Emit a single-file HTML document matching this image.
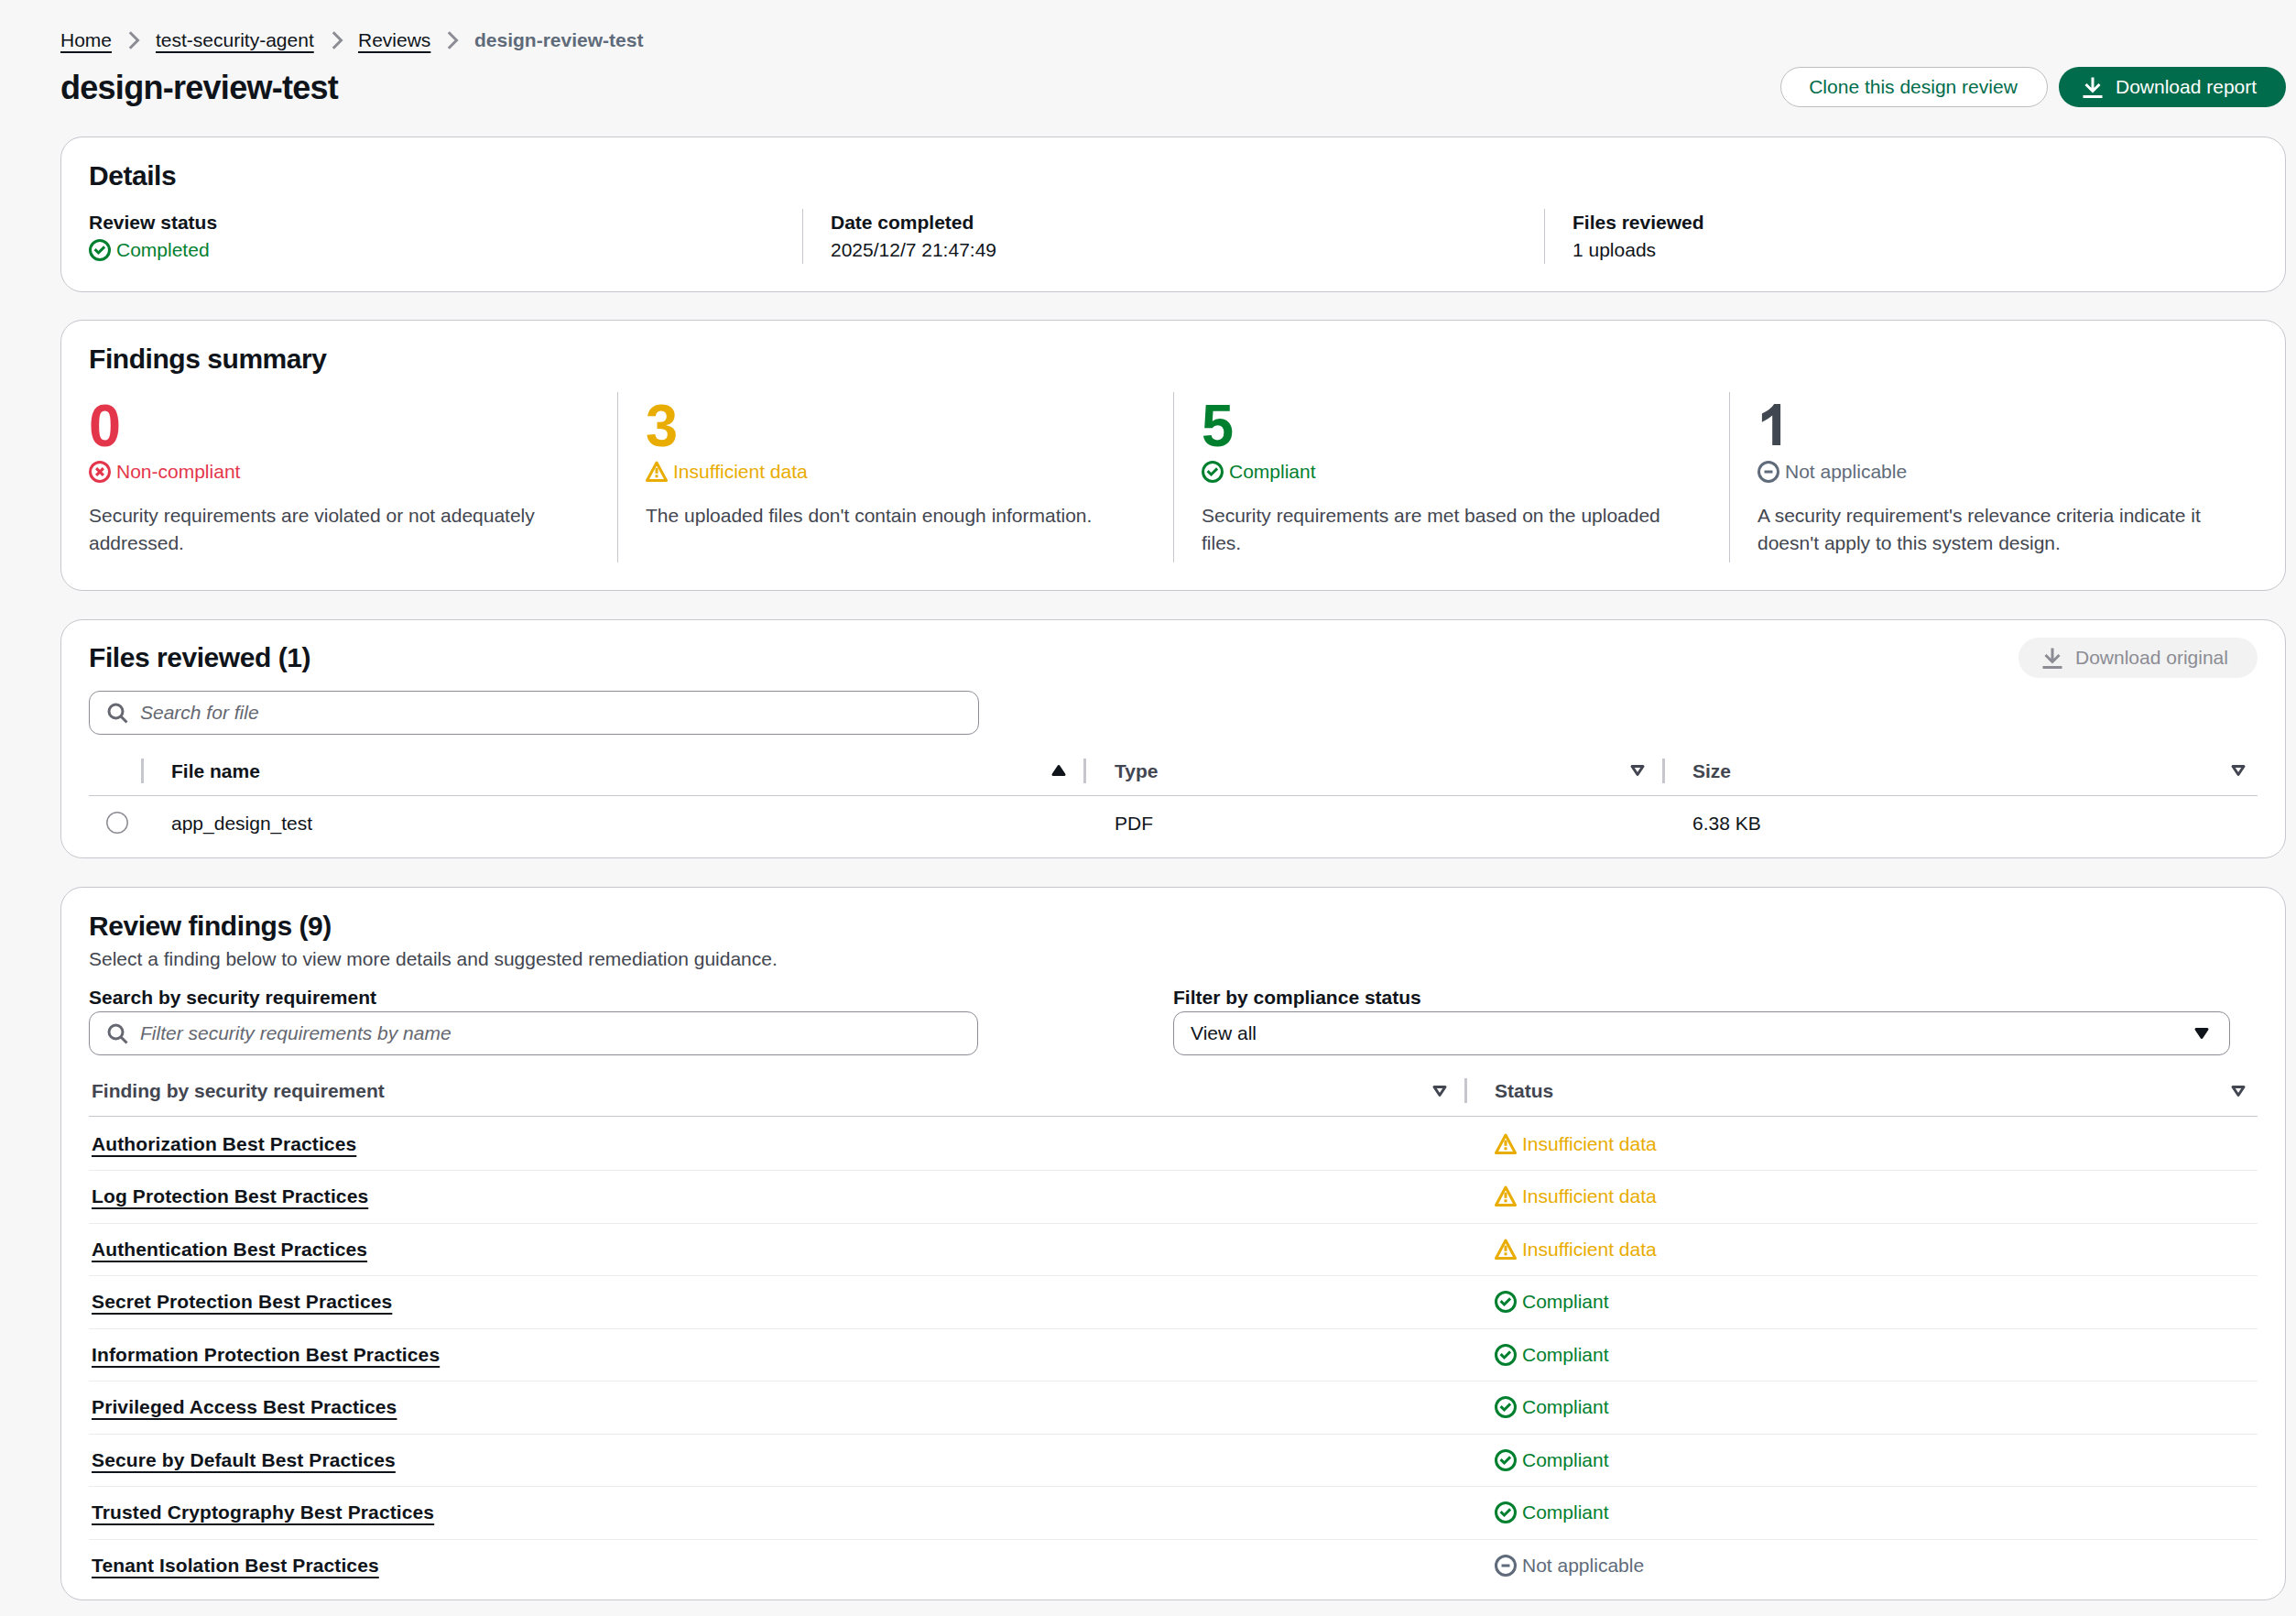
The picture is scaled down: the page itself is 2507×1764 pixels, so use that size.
<!DOCTYPE html>
<html><head><meta charset="utf-8">
<style>
*{box-sizing:border-box;margin:0;padding:0}
html,body{width:2507px;height:1764px;overflow:hidden;background:#f7f7f7}
body{font-family:"Liberation Sans",sans-serif;color:#0f141a;font-size:21px;line-height:30px;position:relative}
.a{position:absolute;white-space:nowrap}
.card{position:absolute;left:66px;width:2430px;background:#fff;border:1px solid #c6c6cd;border-radius:24px}
.h2{font-size:30px;line-height:36px;font-weight:700;letter-spacing:-0.45px}
.b{font-weight:700}
.sec{color:#424650}
.green{color:#00802f}
.red{color:#e4364a}
.amber{color:#e9ac00}
.gray{color:#5f6b7a}
.vdiv{position:absolute;width:1px;background:#c6c6cd}
svg{position:absolute;overflow:visible}
.ic{fill:none;stroke-width:2;stroke-linecap:round;stroke-linejoin:round}
.lnk{text-decoration:underline;text-underline-offset:5px;text-decoration-thickness:2px}
.num{font-size:63px;line-height:72px;font-weight:700;letter-spacing:-1.89px;transform:scaleY(1.035);transform-origin:0 59px}
.input{position:absolute;border:1px solid #8c8c94;border-radius:12px;background:#fff}
.ph{font-style:italic;color:#656871}
.hline{position:absolute;height:2px;background:#c6c6cd}
.rline{position:absolute;height:1px;background:#ebebf0}
.tl{letter-spacing:0.12px}
</style></head><body>
<svg width="0" height="0" style="position:absolute;left:0;top:0">
<symbol id="i-ok" viewBox="0 0 16 16"><g fill="none" stroke="#00802f" stroke-width="2"><circle cx="8" cy="8" r="7"/><path d="M4.4 7.4 7 10l4.4-4.4"/></g></symbol>
<symbol id="i-warn" viewBox="0 0 16 16"><path d="M8 1.35 15 14.35H1z" fill="none" stroke="#e9ac00" stroke-width="2" stroke-linejoin="round"/><rect x="7" y="5.1" width="2" height="4.1" fill="#e9ac00"/><rect x="7" y="10.2" width="2" height="2" fill="#e9ac00"/></symbol>
<symbol id="i-na" viewBox="0 0 16 16"><g fill="none" stroke="#5f6b7a" stroke-width="2"><circle cx="8" cy="8" r="7"/><path d="M5 8h6"/></g></symbol>
<symbol id="i-err" viewBox="0 0 16 16"><g fill="none" stroke="#e4364a" stroke-width="2"><circle cx="8" cy="8" r="7"/><path d="m10.6 5.4-5.2 5.2m5.2 0-5.2-5.2"/></g></symbol>
<symbol id="i-dl" viewBox="0 0 16 16"><path d="M8 1v10M3 6l5 5 5-5M1 15h14" fill="none" stroke="currentColor" stroke-width="2"/></symbol>
<symbol id="i-search" viewBox="0 0 16 16"><g fill="none" stroke="currentColor" stroke-width="2"><circle cx="7" cy="7" r="5"/><path d="m15 15-4.5-4.5"/></g></symbol>
<symbol id="i-cdown" viewBox="0 0 16 16"><path d="M4 5h8l-4 6z" fill="none" stroke="currentColor" stroke-width="2" stroke-linejoin="round"/></symbol>
<symbol id="i-cdownf" viewBox="0 0 16 16"><path d="M4 5h8l-4 6z" fill="currentColor" stroke="currentColor" stroke-width="2" stroke-linejoin="round"/></symbol>
<symbol id="i-cupf" viewBox="0 0 16 16"><path d="M4 11h8L8 5z" fill="currentColor" stroke="currentColor" stroke-width="2" stroke-linejoin="round"/></symbol>
</svg>

<!-- breadcrumb -->
<div class="a lnk" style="left:66px;top:29px">Home</div>
<svg style="left:134px;top:32px" width="24" height="24" viewBox="0 0 16 16"><path fill="none" stroke="#8c8c94" stroke-width="2" d="M5.2 2.2 11 8l-5.8 5.8"/></svg>
<div class="a lnk" style="left:170px;top:29px">test-security-agent</div>
<svg style="left:356px;top:32px" width="24" height="24" viewBox="0 0 16 16"><path fill="none" stroke="#8c8c94" stroke-width="2" d="M5.2 2.2 11 8l-5.8 5.8"/></svg>
<div class="a lnk" style="left:391px;top:29px">Reviews</div>
<svg style="left:482px;top:32px" width="24" height="24" viewBox="0 0 16 16"><path fill="none" stroke="#8c8c94" stroke-width="2" d="M5.2 2.2 11 8l-5.8 5.8"/></svg>
<div class="a b gray" style="left:518px;top:29px">design-review-test</div>

<!-- title -->
<div class="a b" style="left:66px;top:73px;font-size:36px;line-height:45px;letter-spacing:-0.72px">design-review-test</div>

<!-- buttons -->
<div class="a" style="left:1944px;top:73px;width:292px;height:44px;border:1px solid #bebebe;border-radius:30px;background:#fff;color:#006c4b;text-align:center;line-height:42px;text-indent:-2px">Clone this design review</div>
<div class="a" style="left:2248px;top:73px;width:248px;height:44px;border-radius:30px;background:#006c4b;color:#fff;line-height:44px;padding-left:62px">Download report</div>
<svg style="left:2273px;top:83px;color:#fff" width="24" height="24" viewBox="0 0 16 16"><use href="#i-dl"/></svg>

<!-- Details card -->
<div class="card" style="top:149px;height:170px">
</div>
<div class="a h2" style="left:97px;top:174px">Details</div>
<div class="a b" style="left:97px;top:228px">Review status</div>
<svg style="left:97px;top:261px" width="24" height="24" viewBox="0 0 16 16"><use href="#i-ok"/></svg>
<div class="a green" style="left:127px;top:258px">Completed</div>
<div class="vdiv" style="left:876px;top:228px;height:60px"></div>
<div class="a b" style="left:907px;top:228px">Date completed</div>
<div class="a" style="left:907px;top:258px">2025/12/7 21:47:49</div>
<div class="vdiv" style="left:1686px;top:228px;height:60px"></div>
<div class="a b" style="left:1717px;top:228px">Files reviewed</div>
<div class="a" style="left:1717px;top:258px">1 uploads</div>

<!-- Findings summary -->
<div class="card" style="top:349px;height:296px"></div>
<div class="a h2" style="left:97px;top:374px">Findings summary</div>

<div class="a num red" style="left:97px;top:429px">0</div>
<svg style="left:97px;top:503px" width="24" height="24" viewBox="0 0 16 16"><use href="#i-err"/></svg>
<div class="a red" style="left:127px;top:500px">Non-compliant</div>
<div class="a sec" style="left:97px;top:548px;white-space:normal;width:540px">Security requirements are violated or not adequately addressed.</div>

<div class="vdiv" style="left:674px;top:428px;height:186px"></div>
<div class="a num amber" style="left:705px;top:429px">3</div>
<svg style="left:705px;top:503px" width="24" height="24" viewBox="0 0 16 16"><use href="#i-warn"/></svg>
<div class="a amber" style="left:735px;top:500px">Insufficient data</div>
<div class="a sec" style="left:705px;top:548px;white-space:normal;width:540px">The uploaded files don't contain enough information.</div>

<div class="vdiv" style="left:1281px;top:428px;height:186px"></div>
<div class="a num green" style="left:1312px;top:429px">5</div>
<svg style="left:1312px;top:503px" width="24" height="24" viewBox="0 0 16 16"><use href="#i-ok"/></svg>
<div class="a green" style="left:1342px;top:500px">Compliant</div>
<div class="a sec" style="left:1312px;top:548px;white-space:normal;width:540px">Security requirements are met based on the uploaded files.</div>

<div class="vdiv" style="left:1888px;top:428px;height:186px"></div>
<svg style="left:1919px;top:427px" width="40" height="72" viewBox="0 0 40 72"><path fill="#414750" d="M18.2 14H25.1V59H16.2V26.6Q11.5 31 4.9 33.7V24.4Q14.5 20 18.2 14Z"/></svg>
<svg style="left:1919px;top:503px" width="24" height="24" viewBox="0 0 16 16"><use href="#i-na"/></svg>
<div class="a gray" style="left:1949px;top:500px">Not applicable</div>
<div class="a sec" style="left:1919px;top:548px;white-space:normal;width:540px">A security requirement's relevance criteria indicate it doesn't apply to this system design.</div>

<!-- Files reviewed -->
<div class="card" style="top:676px;height:261px"></div>
<div class="a h2" style="left:97px;top:700px">Files reviewed (1)</div>
<div class="a" style="left:2204px;top:696px;width:261px;height:44px;border-radius:30px;background:#f2f2f2;color:#8c8c94;line-height:43px;padding-left:62px">Download original</div>
<svg style="left:2229px;top:706px;color:#8c8c94" width="24" height="24" viewBox="0 0 16 16"><use href="#i-dl"/></svg>
<div class="input" style="left:97px;top:754px;width:972px;height:48px"></div>
<svg style="left:116px;top:766px;color:#656871" width="24" height="24" viewBox="0 0 16 16"><use href="#i-search"/></svg>
<div class="a ph" style="left:153px;top:763px">Search for file</div>


<!-- files table -->
<div class="vdiv" style="left:154px;top:828px;height:27px;width:3px"></div>
<div class="a b" style="left:187px;top:827px">File name</div>
<svg style="left:1144px;top:829px;color:#0f141a" width="24" height="24" viewBox="0 0 16 16"><use href="#i-cupf"/></svg>
<div class="vdiv" style="left:1183px;top:828px;height:27px;width:3px"></div>
<div class="a b sec" style="left:1217px;top:827px">Type</div>
<svg style="left:1776px;top:829px;color:#424650" width="24" height="24" viewBox="0 0 16 16"><use href="#i-cdown"/></svg>
<div class="vdiv" style="left:1815px;top:828px;height:27px;width:3px"></div>
<div class="a b sec" style="left:1848px;top:827px">Size</div>
<svg style="left:2432px;top:829px;color:#424650" width="24" height="24" viewBox="0 0 16 16"><use href="#i-cdown"/></svg>
<div class="hline" style="left:97px;top:868px;width:2368px;height:1px"></div>
<svg style="left:116px;top:886px" width="24" height="24" viewBox="0 0 24 24"><circle cx="12" cy="12" r="11.2" fill="#fff" stroke="#8c8c94" stroke-width="1.5"/></svg>
<div class="a" style="left:187px;top:884px">app_design_test</div>
<div class="a" style="left:1217px;top:884px">PDF</div>
<div class="a" style="left:1848px;top:884px">6.38 KB</div>

<!-- Review findings -->
<div class="card" style="top:968px;height:779px"></div>
<div class="a h2" style="left:97px;top:993px">Review findings (9)</div>
<div class="a sec" style="left:97px;top:1032px">Select a finding below to view more details and suggested remediation guidance.</div>
<div class="a b" style="left:97px;top:1074px">Search by security requirement</div>
<div class="input" style="left:97px;top:1104px;width:971px;height:48px"></div>
<svg style="left:116px;top:1116px;color:#656871" width="24" height="24" viewBox="0 0 16 16"><use href="#i-search"/></svg>
<div class="a ph" style="left:153px;top:1113px">Filter security requirements by name</div>
<div class="a b" style="left:1281px;top:1074px">Filter by compliance status</div>
<div class="input" style="left:1281px;top:1104px;width:1154px;height:48px"></div>
<div class="a" style="left:1300px;top:1113px">View all</div>
<svg style="left:2392px;top:1116px;color:#0f141a" width="24" height="24" viewBox="0 0 16 16"><use href="#i-cdownf"/></svg>
<div class="a b sec" style="left:100px;top:1176px">Finding by security requirement</div>
<svg style="left:1560px;top:1179px;color:#424650" width="24" height="24" viewBox="0 0 16 16"><use href="#i-cdown"/></svg>
<div class="vdiv" style="left:1599px;top:1177px;height:27px;width:3px"></div>
<div class="a b sec" style="left:1632px;top:1176px">Status</div>
<svg style="left:2432px;top:1179px;color:#424650" width="24" height="24" viewBox="0 0 16 16"><use href="#i-cdown"/></svg>
<div class="hline" style="left:97px;top:1218px;width:2368px;height:1px"></div>
<div class="a b lnk tl" style="left:100px;top:1234px">Authorization Best Practices</div>
<svg style="left:1632px;top:1237px" width="24" height="24" viewBox="0 0 16 16"><use href="#i-warn"/></svg>
<div class="a amber" style="left:1662px;top:1234px">Insufficient data</div>
<div class="rline" style="left:97px;top:1277px;width:2368px"></div>
<div class="a b lnk tl" style="left:100px;top:1291px">Log Protection Best Practices</div>
<svg style="left:1632px;top:1294px" width="24" height="24" viewBox="0 0 16 16"><use href="#i-warn"/></svg>
<div class="a amber" style="left:1662px;top:1291px">Insufficient data</div>
<div class="rline" style="left:97px;top:1335px;width:2368px"></div>
<div class="a b lnk tl" style="left:100px;top:1349px">Authentication Best Practices</div>
<svg style="left:1632px;top:1352px" width="24" height="24" viewBox="0 0 16 16"><use href="#i-warn"/></svg>
<div class="a amber" style="left:1662px;top:1349px">Insufficient data</div>
<div class="rline" style="left:97px;top:1392px;width:2368px"></div>
<div class="a b lnk tl" style="left:100px;top:1406px">Secret Protection Best Practices</div>
<svg style="left:1632px;top:1409px" width="24" height="24" viewBox="0 0 16 16"><use href="#i-ok"/></svg>
<div class="a green" style="left:1662px;top:1406px">Compliant</div>
<div class="rline" style="left:97px;top:1450px;width:2368px"></div>
<div class="a b lnk tl" style="left:100px;top:1464px">Information Protection Best Practices</div>
<svg style="left:1632px;top:1467px" width="24" height="24" viewBox="0 0 16 16"><use href="#i-ok"/></svg>
<div class="a green" style="left:1662px;top:1464px">Compliant</div>
<div class="rline" style="left:97px;top:1507px;width:2368px"></div>
<div class="a b lnk tl" style="left:100px;top:1521px">Privileged Access Best Practices</div>
<svg style="left:1632px;top:1524px" width="24" height="24" viewBox="0 0 16 16"><use href="#i-ok"/></svg>
<div class="a green" style="left:1662px;top:1521px">Compliant</div>
<div class="rline" style="left:97px;top:1565px;width:2368px"></div>
<div class="a b lnk tl" style="left:100px;top:1579px">Secure by Default Best Practices</div>
<svg style="left:1632px;top:1582px" width="24" height="24" viewBox="0 0 16 16"><use href="#i-ok"/></svg>
<div class="a green" style="left:1662px;top:1579px">Compliant</div>
<div class="rline" style="left:97px;top:1622px;width:2368px"></div>
<div class="a b lnk tl" style="left:100px;top:1636px">Trusted Cryptography Best Practices</div>
<svg style="left:1632px;top:1639px" width="24" height="24" viewBox="0 0 16 16"><use href="#i-ok"/></svg>
<div class="a green" style="left:1662px;top:1636px">Compliant</div>
<div class="rline" style="left:97px;top:1680px;width:2368px"></div>
<div class="a b lnk tl" style="left:100px;top:1694px">Tenant Isolation Best Practices</div>
<svg style="left:1632px;top:1697px" width="24" height="24" viewBox="0 0 16 16"><use href="#i-na"/></svg>
<div class="a gray" style="left:1662px;top:1694px">Not applicable</div>
</body></html>
